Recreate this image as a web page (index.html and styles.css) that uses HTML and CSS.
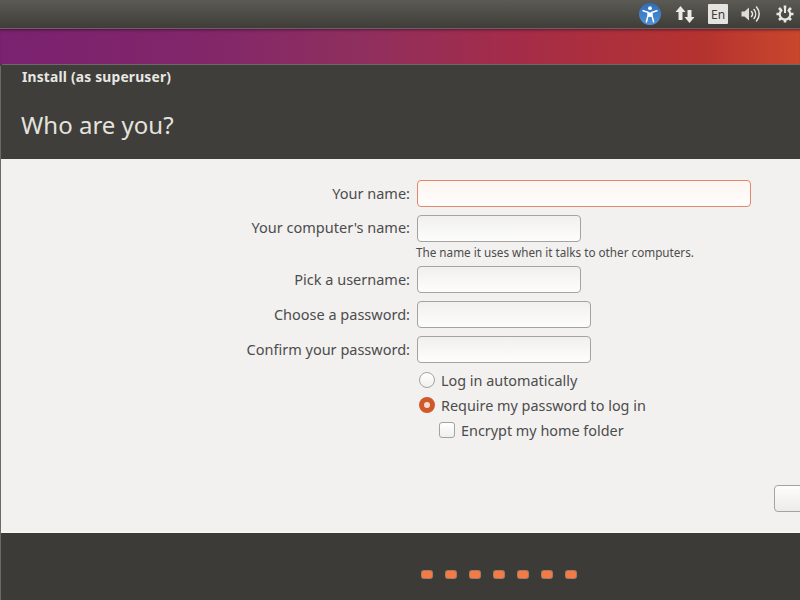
FILE: index.html
```html
<!DOCTYPE html>
<html lang="en">
<head>
<meta charset="utf-8">
<title>Install</title>
<link rel="stylesheet" href="styles.css">
</head>
<body>
<header class="topbar">
  <svg class="tray-icon" width="24" height="24" viewBox="0 0 24 24"><defs><linearGradient id="a11y" x1="0" y1="0" x2="0" y2="1"><stop offset="0" stop-color="#2f6db5"/><stop offset="1" stop-color="#4f93d6"/></linearGradient></defs><circle cx="12" cy="12" r="11" fill="url(#a11y)"/><circle cx="12" cy="6.200" r="1.900" fill="#fff"/><path d="M5 8.800l5 1.600v3.200l-1.600 6.200M19 8.800l-5 1.600v3.200l1.600 6.200" fill="none" stroke="#fff" stroke-width="1.500" stroke-linecap="round"/><path d="M10 10.400h4v4.500h-4z" fill="#fff"/></svg>
  <svg class="tray-icon" width="22" height="22" viewBox="0 0 22 22"><path d="M6.500 3L1.500 9H4.500V17H8.500V9H11.500z" fill="#ecebe7"/><path d="M15.500 20L20.500 14H17.500V7H13.500V14H10.500z" fill="#ecebe7"/></svg>
  <span class="lang">En</span>
  <svg class="tray-icon" width="22" height="22" viewBox="0 0 22 22"><path d="M1.500 8.500H4.500L9 4.500V17.500L4.500 13.500H1.500z" fill="#dddcd8"/><path d="M11.500 8.500a3.500 3.500 0 0 1 0 5M14 6.500a7 7 0 0 1 0 9M16.500 4a10.500 10.500 0 0 1 0 14" fill="none" stroke="#e9e8e4" stroke-width="1.500" stroke-linecap="round"/></svg>
  <svg class="tray-icon" width="22" height="22" viewBox="0 0 22 22"><path d="M11 2.500v3M11 16.500v3M2.500 11h3M16.500 11h3M5 5l2.200 2.200M14.800 14.800L17 17M5 17l2.200-2.200M14.800 7.200L17 5" stroke="#e9e8e4" stroke-width="2.600"/><path d="M8.200 6.800a5.300 5.300 0 1 0 5.600 0" fill="none" stroke="#e9e8e4" stroke-width="2.200"/><path d="M11 3.500v6.500" stroke="#e9e8e4" stroke-width="2"/></svg>
</header>
<div class="wallpaper"></div>
<main class="window">
  <div class="window-head">
    <div class="window-title">Install (as superuser)</div>
    <h1 class="page-title">Who are you?</h1>
  </div>
  <div class="window-body">
    <form class="form">
      <label class="label">Your name:</label>
      <span class="input input-focus"></span>
      <label class="label label-up">Your computer's name:</label>
      <span class="input input-s"></span>
      <span class="hint">The name it uses when it talks to other computers.</span>
      <label class="label">Pick a username:</label>
      <span class="input input-s"></span>
      <label class="label">Choose a password:</label>
      <span class="input input-m"></span>
      <label class="label">Confirm your password:</label>
      <span class="input input-m"></span>
      <div class="options">
        <div class="option"><span class="radio"></span>Log in automatically</div>
        <div class="option"><span class="radio radio-on"></span>Require my password to log in</div>
        <div class="option option-sub"><span class="check"></span>Encrypt my home folder</div>
      </div>
    </form>
    <div class="actions"><span class="button"></span></div>
  </div>
  <footer class="window-foot">
    <span class="dot"></span><span class="dot"></span><span class="dot"></span><span class="dot"></span><span class="dot"></span><span class="dot"></span><span class="dot"></span>
  </footer>
</main>
</body>
</html>
```
FILE: styles.css
```css
* { box-sizing: border-box; }
html, body { margin: 0; height: 100%; }
body {
  width: 800px;
  height: 600px;
  overflow: hidden;
  display: flex;
  flex-direction: column;
  font-family: "Noto Sans", "Open Sans", sans-serif;
  background: #3c3b37;
}
.topbar {
  height: 29px;
  flex: none;
  display: flex;
  align-items: center;
  justify-content: flex-end;
  gap: 12px;
  padding-right: 4px;
  background: linear-gradient(#5b5a55, #3e3d38);
  border-bottom: 1px solid #6e5f68;
}
.lang {
  width: 20px;
  height: 20px;
  display: flex;
  align-items: center;
  justify-content: center;
  background: #e4e3e0;
  color: #3c3b37;
  font-size: 12px;
  border-radius: 1px;
}
.wallpaper {
  height: 35px;
  flex: none;
  background: linear-gradient(90deg, #7a2170 0%, #82266a 25%, #8f2f5e 45%, #a52c48 65%, #b5332f 88%, #c9472c 100%);
  box-shadow: inset 0 3px 3px -2px rgba(40, 10, 30, .6);
}
.window {
  flex: 1;
  display: flex;
  flex-direction: column;
  border-left: 1px solid #6b6a66;
  border-top: 1px solid #6b6a66;
  border-top-left-radius: 4px;
  min-height: 0;
}
.window-head {
  height: 94px;
  flex: none;
  background: #3f3e3a;
  padding: 3px 0 0 21px;
}
.window-title {
  color: #e8e7e3;
  font-size: 13.800px;
  font-weight: 700;
  line-height: 18px;
  letter-spacing: .2px;
}
.page-title {
  margin: 23px 0 0 -1px;
  color: #e4e3df;
  font-size: 24px;
  font-weight: 400;
  line-height: 32px;
}
.window-body {
  height: 374px;
  flex: none;
  background: #f2f1f0;
  color: #4c4c4c;
  padding-top: 21px;
  position: relative;
  border-bottom: 2px solid #f6f5ef;
}
.form {
  display: grid;
  grid-template-columns: 409px 1fr;
  column-gap: 7px;
  row-gap: 8px;
  align-items: center;
  font-size: 14.500px;
}
.label { text-align: right; line-height: 18px; margin-bottom: 2px; }
.label-up { margin-bottom: 4px; }
.input {
  height: 27px;
  display: block;
  border: 1px solid #a3a3a1;
  border-radius: 4px;
  background: linear-gradient(#f1f0ee, #fdfdfc);
}
.input-focus { width: 334px; border-color: #e2886a; background: linear-gradient(#fdf6f1, #fffdfb); }
.input-s { width: 164px; }
.input-m { width: 174px; }
.hint {
  grid-column: 2;
  font-size: 11.700px;
  line-height: 16px;
  margin: -6px 0 -2px -1px;
}
.options {
  grid-column: 2;
  display: flex;
  flex-direction: column;
  gap: 7px;
  margin-top: 0;
  font-size: 14.400px;
}
.option { display: flex; align-items: center; gap: 6px; height: 18px; }
.option-sub { padding-left: 22px; }
.radio {
  width: 16px;
  height: 16px;
  border-radius: 50%;
  margin-left: 2px;
  border: 1px solid #a3a3a1;
  background: linear-gradient(#fff, #f0efee);
}
.radio-on {
  border: 5px solid #d0592c;
  background: #f3ddd0;
}
.check {
  width: 16px;
  height: 16px;
  border: 1px solid #a3a3a1;
  border-radius: 3px;
  background: linear-gradient(#fff, #f0efee);
}
.actions {
  position: absolute;
  right: -34px;
  top: 326px;
}
.button {
  display: block;
  width: 60px;
  height: 27px;
  border: 1px solid #a3a3a1;
  border-radius: 4px;
  background: linear-gradient(#fdfdfc, #ecebe9);
}
.window-foot {
  flex: 1;
  background: #3c3b37;
  display: flex;
  gap: 14px;
  padding: 38px 0 0 421px;
}
.dot {
  width: 10px;
  height: 7px;
  border-radius: 2px;
  background: #f47b45;
  box-shadow: 0 0 0 1px rgba(225, 170, 130, .6);
}
```
